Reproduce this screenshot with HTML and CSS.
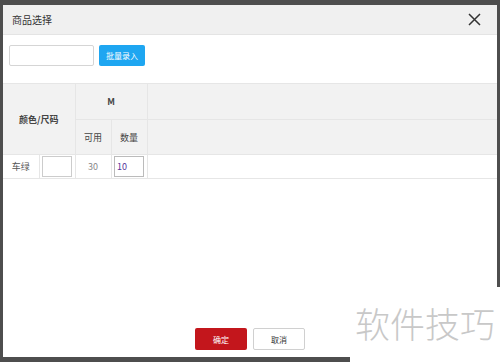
FILE: index.html
```html
<!DOCTYPE html>
<html>
<head>
    <meta charset="utf-8">
    <link rel="stylesheet" href="styles.css">
</head>
<body>
    <div class="goods-dialog">
        <div class="dialog-header">
            商品选择
            <button class="close-btn">
                <svg width="13" height="13" viewBox="0 0 13 13"><path d="M1 1L12 12M12 1L1 12" stroke="#333" stroke-width="1.5"/></svg>
            </button>
        </div>
        <div class="dialog-toolbar">
            <input type="text" class="batch-input">
            <button class="batch-btn">批量录入</button>
        </div>
        <table class="size-table">
            <colgroup>
                <col style="width: 36px">
                <col style="width: 36px">
                <col style="width: 36px">
                <col style="width: 36px">
                <col>
            </colgroup>
            <tr class="head-row1">
                <th colspan="2" rowspan="2">颜色/尺码</th>
                <th colspan="2">M</th>
                <th></th>
            </tr>
            <tr class="head-row2">
                <th>可用</th>
                <th>数量</th>
                <th></th>
            </tr>
            <tr class="body-row">
                <td>车绿</td>
                <td><input type="text" class="cell-input"></td>
                <td class="stock">30</td>
                <td><input type="text" class="cell-input qty" value="10"></td>
                <td></td>
            </tr>
        </table>
        <div class="dialog-footer">
            <button class="ok-btn">确定</button>
            <button class="cancel-btn">取消</button>
        </div>
    </div>
    <div class="watermark">软件技巧</div>
</body>
</html>
```

FILE: styles.css
```css
body {
    margin: 0;
    background: #4e4e4e;
    font-family: "Noto Sans CJK SC", "Liberation Sans", sans-serif;
    overflow: hidden;
}

.goods-dialog {
    margin: 5px 0 0 3px;
    width: 494px;
    height: 352px;
    background: white;
    display: flex;
    flex-direction: column;
}

.dialog-header {
    height: 29px;
    background: #f0f0f0;
    border-bottom: 1px solid #e4e4e4;
    padding: 0 9px;
    display: flex;
    justify-content: space-between;
    align-items: center;
    font-size: 10px;
    color: #333;
}

.close-btn {
    background: none;
    border: none;
    padding: 0;
    margin-right: 7px;
    width: 13px;
    height: 13px;
    display: flex;
}

.dialog-toolbar {
    display: flex;
    padding: 10px 6px 0;
    gap: 5px;
}

.batch-input {
    width: 85px;
    height: 21px;
    box-sizing: border-box;
    border: 1px solid #d5d5d5;
    border-radius: 2px;
    padding: 0 4px;
}

.batch-btn {
    width: 46px;
    height: 21px;
    background: #1ea6f1;
    color: white;
    border: none;
    border-radius: 2px;
    font-family: "Noto Sans CJK SC", sans-serif;
    font-size: 8px;
    padding: 0;
}

.size-table {
    margin-top: 17px;
    width: 100%;
    border-collapse: collapse;
    table-layout: fixed;
    font-size: 9px;
    color: #555;
}

.size-table th,
.size-table td {
    border: 1px solid #e6e6e6;
    text-align: center;
    padding: 0;
}

.size-table tr > :last-child {
    border-right: none;
}

.size-table tr:first-child th {
    border-top: 1px solid #e6e6e6;
}

.size-table th:first-child,
.size-table td:first-child {
    border-left: none;
}

.size-table th {
    background: #f2f2f2;
    font-weight: bold;
    color: #444;
}

.head-row1 {
    height: 36px;
}

.head-row2 {
    height: 35px;
}

.head-row2 th {
    font-weight: normal;
}

.body-row {
    height: 24px;
}

.stock {
    color: #888;
}

.cell-input {
    width: 30px;
    height: 21px;
    box-sizing: border-box;
    border: 1px solid #ccc;
    padding: 0 2px;
    font-size: 9px;
    font-family: "Noto Sans CJK SC", sans-serif;
    display: block;
    margin: 0 auto;
}

.qty {
    color: #553399;
    border-color: #bbb;
}

.dialog-footer {
    margin-top: auto;
    display: flex;
    justify-content: center;
    gap: 6px;
    padding-bottom: 7px;
}

.ok-btn,
.cancel-btn {
    width: 52px;
    height: 22px;
    border-radius: 2px;
    font-family: "Noto Sans CJK SC", sans-serif;
    font-size: 8px;
    padding: 0;
}

.ok-btn {
    background: #c3161c;
    color: white;
    border: none;
}

.cancel-btn {
    background: white;
    color: #333;
    border: 1px solid #d0d0d0;
}

.watermark {
    position: absolute;
    left: 350px;
    top: 287px;
    width: 150px;
    height: 75px;
    background: white;
    color: #c8c8c8;
    font-size: 35px;
    line-height: 1;
    padding: 18px 0 0 5px;
    box-sizing: border-box;
    font-family: "Noto Sans CJK SC", sans-serif;
    font-weight: 300;
}
```
